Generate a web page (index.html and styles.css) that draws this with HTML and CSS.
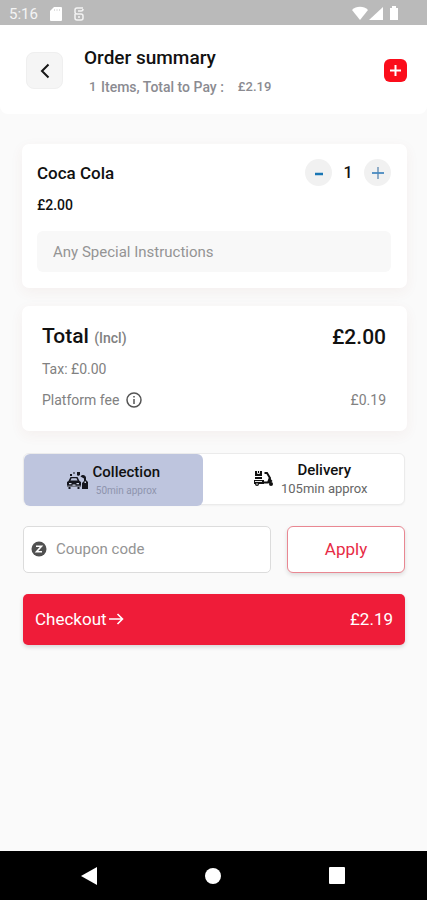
FILE: index.html
```html
<!DOCTYPE html>
<html lang="en">
<head>
<meta charset="utf-8">
<meta name="viewport" content="width=device-width, initial-scale=1">
<title>Order summary</title>
<link rel="stylesheet" href="styles.css">
</head>
<body>
<div class="status">
  <span class="clock">5:16</span>
  <svg width="12" height="14" viewBox="0 0 12 14"><path fill="#fff" d="M4 0h7a1 1 0 0 1 1 1v12a1 1 0 0 1-1 1H1a1 1 0 0 1-1-1V4z"/><path stroke="#dedede" d="M4.500 2v2M7 2v2M9.500 2v2"/></svg>
  <svg class="service" width="10" height="14" viewBox="0 0 10 14" fill="none" stroke="#f4f4f4" stroke-width="1.500"><path d="M9 1H3a2 2 0 0 0-2 2v2a2 2 0 0 0 2 2h4a2 2 0 0 1 2 2v2a2 2 0 0 1-2 2H3a2 2 0 0 1-2-2V7M4 4h3a2 2 0 0 0 2-2M4 10h2"/></svg>
  <svg class="signals" width="48" height="15" viewBox="0 0 48 15" fill="#fff"><path d="M0 4C4-.3 12-.3 16 4L8 14z"/><path d="M31 1v13H17z"/><path d="M38 2h2V0h4v2h2v12h-8z"/></svg>
</div>
<header class="header">
  <button class="back" aria-label="Back"><svg width="10" height="16" viewBox="0 0 10 16"><path d="M8.500 1.500 2 8l6.500 6.500" fill="none" stroke="#161616" stroke-width="2"/></svg></button>
  <div class="heading">
    <h1>Order summary</h1>
    <p><span class="count">1</span><span>Items, Total to Pay :</span><span class="due">£2.19</span></p>
  </div>
  <button class="add" aria-label="Add"><svg width="13" height="13" viewBox="0 0 13 13"><path d="M6.500 1v11M1 6.500h11" stroke="#fff" stroke-width="2"/></svg></button>
</header>
<main class="content">
  <section class="card item">
    <div class="row">
      <h2>Coca Cola</h2>
      <div class="stepper">
        <button aria-label="Remove one"><svg width="14" height="14" viewBox="0 0 14 14"><path d="M3 8h8" stroke="#1976b4" stroke-width="2.500"/></svg></button>
        <span>1</span>
        <button aria-label="Add one"><svg width="14" height="14" viewBox="0 0 14 14"><path d="M7 1v12" stroke="#85a5c2" stroke-width="1.800"/><path d="M1 7h12" stroke="#4889c0" stroke-width="1.800"/></svg></button>
      </div>
    </div>
    <p class="price">£2.00</p>
    <input class="notes" type="text" placeholder="Any Special Instructions" aria-label="Any Special Instructions">
  </section>
  <section class="card totals">
    <div class="row total"><h2>Total <small>(Incl)</small></h2><span>£2.00</span></div>
    <p class="line">Tax: £0.00</p>
    <div class="row line"><span class="fee">Platform fee <svg width="16" height="16" viewBox="0 0 16 16" fill="none" stroke="#555"><circle cx="8" cy="8" r="7" stroke-width="1.500"/><path d="M8 7v5M8 4v1.500" stroke-width="1.500"/></svg></span><span>£0.19</span></div>
  </section>
  <div class="controls">
    <div class="modes">
      <button class="mode selected">
        <svg width="22" height="20" viewBox="0 0 22 20"><g fill="#15161e"><path d="M1.500 10 3.500 6h7l2 4 1.500 1v5h-1.500v2h-2v-2H3.500v2h-2v-2H0v-5z"/><path d="M3 3h2v2H3zM6 1.500h2v1H6zM10 1h3v3l-2 1-1-1z"/><path d="M13.500 5.500c2-2.500 5-1.500 5.500 1V9l2 2v7h-6v-6l2-2V7.500z"/></g><path d="M4.500 7.200h5L10.500 9.500h-7z" fill="#bec5de"/><path d="M2 12h2.500v1.200H2zM9.500 12H12v1.200H9.500zM5.500 13.500h3v1h-3zM17.500 10.500h1.500v1.500h-1.500zM0 14.800h14v.6H0z" fill="#d5daeb"/></svg>
        <span class="label"><b>Collection</b><small>50min approx</small></span>
      </button>
      <button class="mode">
        <svg width="21" height="18" viewBox="0 0 21 18"><path fill="#111" d="M2 1h7v5H2zM2 7h7v2H2zM1 10h10v4H1z"/><path fill="none" stroke="#111" stroke-width="2" d="M11.500 3h2.500l3 5-2 4.500h-4"/><path fill="#111" d="m16 7 3.500 4-2.500 2.500-2-1z"/><circle cx="4" cy="14" r="2" fill="#111"/><circle cx="18" cy="14" r="2" fill="#111"/><path stroke="#fff" stroke-width=".9" d="M4.500 1v2.500h2V1M2 11.500h7"/><circle cx="4" cy="14" r=".8" fill="#fff"/></svg>
        <span class="label"><b>Delivery</b><small>105min approx</small></span>
      </button>
    </div>
    <div class="coupon">
      <label class="code"><svg width="16" height="16" viewBox="0 0 16 16"><circle cx="8" cy="8" r="7.500" fill="#505050"/><path d="M5 5.200h5.500l-5 5.600H11" fill="none" stroke="#fff" stroke-width="1.600"/></svg><input type="text" placeholder="Coupon code" aria-label="Coupon code"></label>
      <button class="apply">Apply</button>
    </div>
    <button class="checkout"><span class="go">Checkout <svg width="15" height="12" viewBox="0 0 15 12"><path d="M0 6h13M8.500 1l5 5-5 5" fill="none" stroke="#fff" stroke-width="1.600"/></svg></span><span>£2.19</span></button>
  </div>
</main>
<nav class="nav">
  <button aria-label="Back"><svg width="16" height="18" viewBox="0 0 16 18"><path d="M16 0v18L0 9z" fill="#fff"/></svg></button>
  <button aria-label="Home"><svg width="16" height="16" viewBox="0 0 16 16"><circle cx="8" cy="8" r="8" fill="#fff"/></svg></button>
  <button aria-label="Recent apps"><svg width="16" height="17" viewBox="0 0 16 17"><rect width="16" height="17" rx="1" fill="#fff"/></svg></button>
</nav>
</body>
</html>
```
FILE: styles.css
```css
* { box-sizing: border-box; }
body {
  margin: 0;
  min-height: 100vh;
  display: flex;
  flex-direction: column;
  background: #fafafa;
  color: #111;
  font-family: Roboto, "Liberation Sans", sans-serif;
}
h1, h2, p { margin: 0; font-weight: 500; }
button, input { font: inherit; }
button { border: 0; padding: 0; color: inherit; display: flex; align-items: center; justify-content: center; }
svg { display: block; flex: none; }
input { border: 0; background: none; min-width: 0; outline: 0; }

.status { height: 25px; background: #bababa; display: flex; align-items: center; padding: 2px 27px 0 9px; }
.clock { color: #f4f4f4; font-size: 15px; width: 41px; }
.service { margin-left: 12px; }
.signals { margin-left: auto; }

.header { height: 89px; background: #fff; border-radius: 0 0 8px 8px; display: flex; align-items: center; padding: 2px 20px 0 26px; }
.back { width: 37px; height: 37px; border-radius: 8px; background: #f5f5f5; border: 1px solid #efefef; }
.heading { flex: 1; margin-left: 21px; }
h1 { font-size: 19px; line-height: 26px; }
.heading p { color: #8b8b91; font-size: 14px; line-height: 20px; margin-top: 6px; padding-left: 5px; display: flex; }
.heading .count { width: 12px; }
.heading .count, .heading .due { font-size: 13px; }
.heading .due { margin-left: 14px; }
.add { width: 23px; height: 23px; border-radius: 6px; background: #fb0d1b; }

.content { flex: 1; padding: 30px 20px 0 22px; }
.card { background: #fff; border-radius: 7px; box-shadow: 0 4px 14px rgba(150, 70, 50, .06); }
.item { height: 144px; padding: 15px 16px 0 15px; }
.row { display: flex; align-items: center; justify-content: space-between; }
.item h2 { font-size: 17px; }
.stepper { display: flex; align-items: center; font-size: 16px; font-weight: 500; }
.stepper button { width: 27px; height: 27px; border-radius: 50%; background: #f1f1f1; }
.stepper span { width: 32px; text-align: center; }
.price { font-size: 14px; line-height: 20px; margin-top: 9px; }
.notes { width: 100%; height: 41px; margin-top: 16px; padding: 0 16px; background: #f8f8f8; border-radius: 6px; font-size: 15px; }
::placeholder { color: #949494; opacity: 1; }
.totals { height: 125px; margin-top: 18px; padding: 16px 21px 0 20px; }
.total, .total h2 { font-size: 21px; line-height: 28px; font-weight: 500; }
.total small { font-size: 14px; color: #818181; }
.line { color: #818181; font-size: 14px; line-height: 20px; margin-top: 7px; font-weight: 400; }
.row.line { margin-top: 11px; }
.fee { display: flex; align-items: center; gap: 7px; }

.controls { padding: 22px 2px 0 1px; }
.modes { display: flex; height: 52px; background: #fff; border: 1px solid #ebebeb; border-radius: 6px; box-shadow: 0 1px 2px rgba(0, 0, 0, .04); }
.mode { flex: 1; background: none; border-radius: 6px; gap: 7px; padding-left: 14px; }
.selected { flex: none; width: 47%; height: 52px; padding: 2px 0 0; background: #bec5de; gap: 4px; }
.label { display: flex; flex-direction: column; align-items: center; }
.label b { font-size: 15px; line-height: 19px; font-weight: 500; }
.label small { font-size: 13px; line-height: 17px; color: #666; }
.selected .label small { font-size: 10px; color: #8e94ad; }
.coupon { display: flex; gap: 16px; margin-top: 21px; height: 47px; }
.code { flex: 1; min-width: 0; display: flex; align-items: center; gap: 9px; padding: 0 7px 2px; background: #fff; border: 1px solid #dcdcdc; border-radius: 5px; }
.code input { flex: 1; padding: 0; font-size: 15px; }
.apply { width: 118px; padding-bottom: 2px; background: #fff; border: 1px solid #e98792; border-radius: 6px; color: #e72b45; font-size: 17px; box-shadow: 0 2px 4px rgba(0, 0, 0, .12); }
.checkout { width: 100%; height: 51px; margin-top: 21px; padding: 0 12px 2px; justify-content: space-between; background: #ef1c39; border-radius: 5px; color: #fff; font-size: 17px; box-shadow: 0 2px 4px rgba(0, 0, 0, .15); }
.go { display: flex; align-items: center; gap: 2px; }

.nav { height: 49px; background: #000; display: flex; justify-content: space-between; align-items: center; padding: 0 82px 0 81px; }
.nav button { background: none; }
```
